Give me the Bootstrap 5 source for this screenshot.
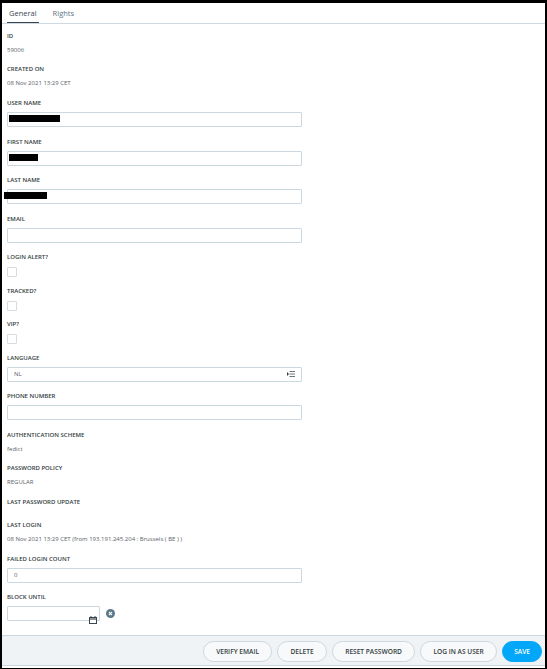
<!DOCTYPE html>
<html lang="en">
<head>
    <meta charset="UTF-8">
    <meta name="viewport" content="width=device-width, initial-scale=1.0">
    <title>User</title>
    <link rel="stylesheet" href="https://cdn.jsdelivr.net/npm/bootstrap@5.3.3/dist/css/bootstrap.min.css">
    <style>
        html, body {
            height: 100%;
        }
        body {
            background: #000;
            padding: 3px 2px 1px 2px;
            overflow: hidden;
            font-family: "Open Sans", "Liberation Sans", sans-serif;
            color: #333b40;
        }
        .user-frame {
            height: 100%;
            width: 543px;
            background: #fff;
        }
        .user-tabs {
            height: 21px;
            border-bottom: 1px solid #cfd8de;
            padding-left: 5px;
            font-size: 7.5px;
        }
        .user-tabs .nav-link {
            padding: 0 2px;
            margin-right: 12px;
            height: 20px;
            line-height: 21px;
            border: 0;
            color: #5d7383;
            background: none;
        }
        .user-tabs .nav-link.active {
            color: #3a4750;
            border-bottom: 1px solid #3a4750;
        }
        .user-form {
            padding: 6.5px 0 0 5px;
            flex: 1 1 auto;
        }
        .field-label {
            display: block;
            margin: 0;
            font-size: 6px;
            font-weight: 600;
            line-height: 10px;
            text-transform: uppercase;
            color: #333b40;
        }
        .field-value {
            font-size: 6px;
            line-height: 14px;
            margin: 2px 0 7.75px;
            color: #5a6268;
        }
        .field-empty {
            height: 3px;
        }
        .field-input {
            margin: 4px 0 9.5px;
            width: 295px;
            height: 15px;
        }
        .field-input .form-control,
        .block-until .form-control {
            height: 15px;
            min-height: 0;
            padding: 0 6px;
            font-size: 6px;
            line-height: 13px;
            border: 1px solid #ccd8df;
            border-radius: 1px;
            color: #55626c;
        }
        .field-check {
            margin: 5px 0 8.5px;
            height: 10px;
        }
        .field-check .form-check-input {
            display: block;
            margin: 0;
            width: 10px;
            height: 10px;
            border: 1px solid #d5dde2;
            border-radius: 1px;
        }
        .redacted {
            position: absolute;
            top: 3px;
            height: 7px;
            background: #000;
        }
        .block-until {
            margin-top: 4px;
            gap: 6px;
        }
        .block-until .date-box {
            width: 93px;
        }
        .date-icon {
            position: absolute;
            right: 3px;
            bottom: -3px;
        }
        .user-footer {
            height: 31px;
            margin-bottom: 2px;
            background: #eff3f6;
            border-top: 1px solid #ccd8df;
            border-bottom: 1px solid #ccd8df;
            padding: 1px 3px 0 0;
            gap: 5.5px;
        }
        .user-footer .btn {
            height: 21px;
            padding: 0 12px;
            font-size: 6.6px;
            font-weight: 600;
            line-height: 19px;
            color: #333b40;
            background: #f7f9fa;
            border: 1px solid #ccd8df;
        }
        .user-footer .btn.btn-save {
            background: #02a7f9;
            border-color: #02a7f9;
            color: #fff;
            padding: 0 11px;
        }
    </style>
</head>
<body>
    <div class="user-frame d-flex flex-column">
        <ul class="nav user-tabs flex-shrink-0">
            <li class="nav-item"><a class="nav-link active" href="#">General</a></li>
            <li class="nav-item"><a class="nav-link" href="#">Rights</a></li>
        </ul>

        <form class="user-form">
            <label class="field-label">ID</label>
            <p class="field-value">59006</p>

            <label class="field-label">Created on</label>
            <p class="field-value">08 Nov 2021 13:29 CET</p>

            <label class="field-label">User name</label>
            <div class="field-input position-relative">
                <input class="form-control" type="text">
                <span class="redacted" style="left: 2px; width: 51px"></span>
            </div>

            <label class="field-label">First name</label>
            <div class="field-input position-relative">
                <input class="form-control" type="text">
                <span class="redacted" style="left: 2px; width: 29px"></span>
            </div>

            <label class="field-label">Last name</label>
            <div class="field-input position-relative">
                <input class="form-control" type="text">
                <span class="redacted" style="left: -3px; width: 43px"></span>
            </div>

            <label class="field-label">Email</label>
            <div class="field-input">
                <input class="form-control" type="text">
            </div>

            <label class="field-label">Login alert?</label>
            <div class="field-check"><input class="form-check-input" type="checkbox"></div>

            <label class="field-label">Tracked?</label>
            <div class="field-check"><input class="form-check-input" type="checkbox"></div>

            <label class="field-label">VIP?</label>
            <div class="field-check"><input class="form-check-input" type="checkbox"></div>

            <label class="field-label">Language</label>
            <div class="field-input">
                <div class="form-control d-flex justify-content-between align-items-center">
                    <span>NL</span>
                    <svg width="8" height="6" viewBox="0 0 8 6" fill="none">
                        <path d="M0 1v4l2-2z" fill="#2f3b45"/>
                        <path d="M2.5 .5h5.5M2.5 3h5.5M2.5 5.5h5.5" stroke="#6b7880" stroke-width="1"/>
                    </svg>
                </div>
            </div>

            <label class="field-label">Phone number</label>
            <div class="field-input">
                <input class="form-control" type="text">
            </div>

            <label class="field-label">Authentication scheme</label>
            <p class="field-value">fedict</p>

            <label class="field-label">Password policy</label>
            <p class="field-value">REGULAR</p>

            <label class="field-label">Last password update</label>
            <div class="field-value field-empty"></div>

            <label class="field-label">Last login</label>
            <p class="field-value">08 Nov 2021 13:29 CET (from 193.191.245.204 : Brussels ( BE ) )</p>

            <label class="field-label">Failed login count</label>
            <div class="field-input">
                <input class="form-control" type="text" value="0">
            </div>

            <label class="field-label">Block until</label>
            <div class="block-until d-flex align-items-center">
                <div class="date-box position-relative">
                    <input class="form-control" type="text">
                    <svg class="date-icon" width="8" height="8" viewBox="0 0 8 8" fill="none">
                        <rect x=".5" y="1.5" width="7" height="6" fill="#fff" stroke="#3a4750"/>
                        <path d="M.5 3h7" stroke="#3a4750" stroke-width="1.2"/>
                        <path d="M2 0v1.5M6 0v1.5" stroke="#3a4750"/>
                    </svg>
                </div>
                <svg width="9" height="9" viewBox="0 0 9 9">
                    <circle cx="4.5" cy="4.5" r="4.5" fill="#5a7a8c"/>
                    <path d="M3 3l3 3M6 3l-3 3" stroke="#fff" stroke-width="1.1"/>
                </svg>
            </div>
        </form>

        <div class="user-footer d-flex justify-content-end align-items-center flex-shrink-0">
            <button class="btn rounded-pill" type="button">VERIFY EMAIL</button>
            <button class="btn rounded-pill" type="button">DELETE</button>
            <button class="btn rounded-pill" type="button">RESET PASSWORD</button>
            <button class="btn rounded-pill" type="button">LOG IN AS USER</button>
            <button class="btn rounded-pill btn-save" type="button">SAVE</button>
        </div>
    </div>
    <script src="https://cdn.jsdelivr.net/npm/bootstrap@5.3.3/dist/js/bootstrap.bundle.min.js"></script>
</body>
</html>
